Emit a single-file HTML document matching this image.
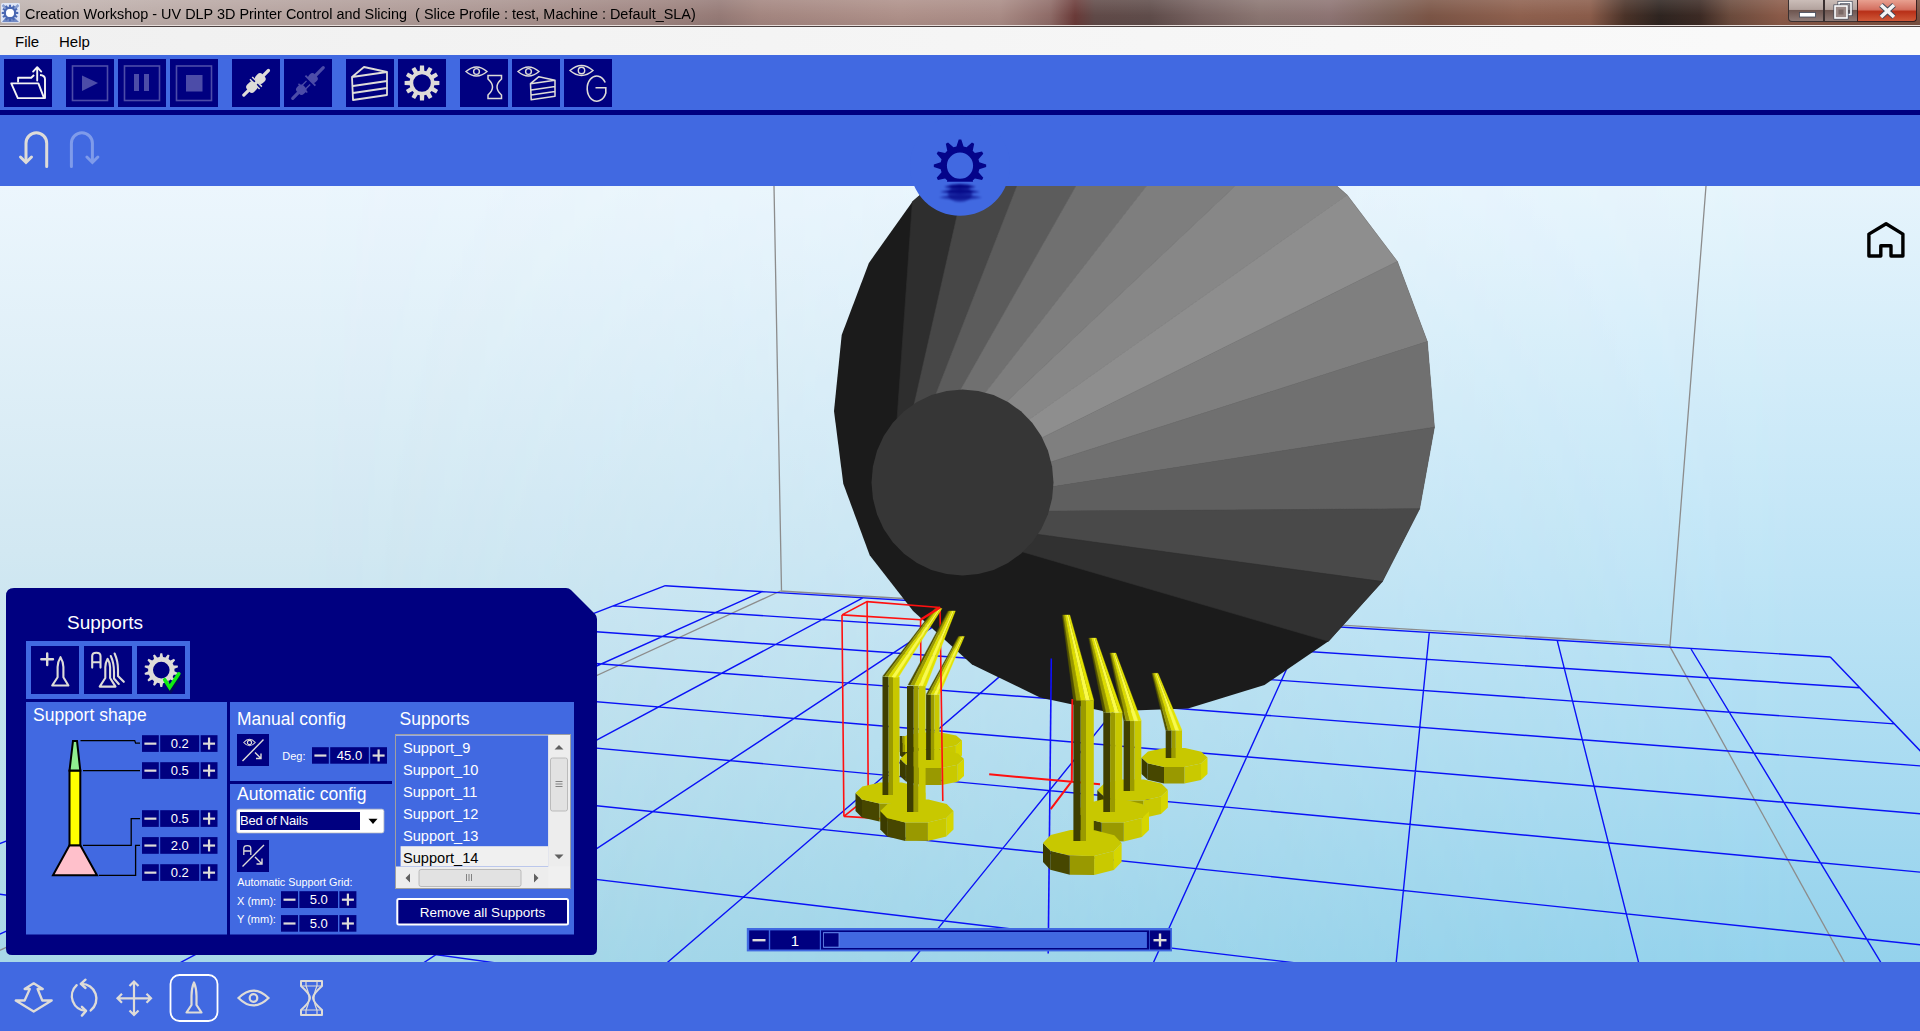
<!DOCTYPE html>
<html><head><meta charset="utf-8"><style>
html,body{margin:0;padding:0;width:1920px;height:1031px;overflow:hidden;background:#4169E1;font-family:"Liberation Sans",sans-serif;}
svg text{font-family:"Liberation Sans",sans-serif;}
</style></head><body>
<div style="position:absolute;left:0;top:0;width:1920px;height:26px;background:linear-gradient(90deg,#bdb3b0 0.0%,#c1b3af 3.12%,#b7a5a1 13.02%,#aa9490 26.04%,#9f8581 33.85%,#957a76 37.5%,#a3857f 39.58%,#ae9089 46.88%,#a98b85 52.08%,#8e6b67 54.69%,#6a3a38 55.99%,#604a48 57.03%,#5f4c4a 59.9%,#776260 62.5%,#8a7571 65.62%,#8d7473 69.27%,#7e6258 72.4%,#7b5546 74.48%,#8e604e 79.17%,#8a5c4a 82.81%,#4a3228 84.64%,#2e2420 86.46%,#3c2a24 88.54%,#6a4a3c 90.1%,#8a5a48 92.71%,#7a5040 100.0%);"></div>
<div style="position:absolute;left:0;top:0;width:1920px;height:26px;background:linear-gradient(180deg,rgba(255,255,255,0.12),rgba(255,255,255,0) 60%,rgba(0,0,0,0.05));"></div>
<div style="position:absolute;left:0;top:25px;width:1920px;height:1px;background:#e8dedb;"></div>
<div style="position:absolute;left:0;top:26px;width:1920px;height:1px;background:#4a4040;"></div>
<svg style="position:absolute;left:0;top:0" width="24" height="26"><rect x="1" y="3" width="19" height="19.7" rx="1.5" fill="#dfe6f6"/><path d="M2,22 L6,17 L10,19 L14,17 L19,22 Z" fill="#5572b8" opacity="0.8"/><path d="M2.5,5 L7,9 M18.5,5 L14,9" stroke="#8aa0d0" stroke-width="2.5"/><path d="M8.89,6.80 L9.02,4.66 L10.98,4.66 L11.11,6.80 L12.08,7.06 L13.28,5.27 L14.97,6.25 L14.01,8.17 L14.73,8.89 L16.65,7.93 L17.63,9.62 L15.84,10.82 L16.10,11.79 L18.24,11.92 L18.24,13.88 L16.10,14.01 L15.84,14.98 L17.63,16.18 L16.65,17.87 L14.73,16.91 L14.01,17.63 L14.97,19.55 L13.28,20.53 L12.08,18.74 L11.11,19.00 L10.98,21.14 L9.02,21.14 L8.89,19.00 L7.92,18.74 L6.72,20.53 L5.03,19.55 L5.99,17.63 L5.27,16.91 L3.35,17.87 L2.37,16.18 L4.16,14.98 L3.90,14.01 L1.76,13.88 L1.76,11.92 L3.90,11.79 L4.16,10.82 L2.37,9.62 L3.35,7.93 L5.27,8.89 L5.99,8.17 L5.03,6.25 L6.72,5.27 L7.92,7.06 Z M14,12.9 A4,4 0 1,0 6,12.9 A4,4 0 1,0 14,12.9 Z" fill="#4a68b2" fill-rule="evenodd"/><circle cx="10" cy="12.9" r="3.9" fill="#ffffff"/></svg>
<div style="position:absolute;left:25px;top:5px;font-family:'Liberation Sans',sans-serif;font-size:15.5px;color:#000;white-space:pre;transform:scaleX(0.931);transform-origin:0 0;">Creation Workshop - UV DLP 3D Printer Control and Slicing  ( Slice Profile : test, Machine : Default_SLA)</div>
<div style="position:absolute;left:1788px;top:0;width:36px;height:22px;border:1px solid #3a3030;border-top:none;border-radius:0 0 0 4px;background:linear-gradient(180deg,#cbbdb8 0%,#b3a39e 45%,#6e5650 50%,#8e7a76 100%);box-sizing:border-box;"></div>
<div style="position:absolute;left:1824px;top:0;width:34px;height:22px;border:1px solid #3a3030;border-top:none;background:linear-gradient(180deg,#cbbdb8 0%,#b3a39e 45%,#6e5650 50%,#8e7a76 100%);box-sizing:border-box;"></div>
<div style="position:absolute;left:1857px;top:0;width:60px;height:22px;border:1px solid #3a2020;border-top:none;border-radius:0 0 4px 0;background:linear-gradient(180deg,#e8a090 0%,#d47060 45%,#b83018 55%,#d05838 100%);box-sizing:border-box;"></div>
<svg style="position:absolute;left:1788px;top:0" width="132" height="24">
<rect x="11.5" y="12.5" width="16" height="4.5" fill="#fff" stroke="#404858" stroke-width="0.8"/>
<rect x="51" y="2.5" width="12" height="12" fill="none" stroke="#404858" stroke-width="3"/><rect x="51" y="2.5" width="12" height="12" fill="none" stroke="#fff" stroke-width="1.6"/>
<rect x="47" y="6" width="12" height="12" fill="#9a8885" stroke="#404858" stroke-width="3"/><rect x="47" y="6" width="12" height="12" fill="#9a8885" stroke="#fff" stroke-width="1.6"/><rect x="50.5" y="9.5" width="5" height="5" fill="#7a6865"/>
<path d="M93,5 L106,17 M106,5 L93,17" stroke="#404858" stroke-width="5.5"/><path d="M93,5 L106,17 M106,5 L93,17" stroke="#f4f4f4" stroke-width="3.6"/>
</svg>
<div style="position:absolute;left:0;top:27px;width:1920px;height:28px;background:linear-gradient(90deg,#f0f0f0,#f5f5f5 50%,#fafafa);"></div>
<div style="position:absolute;left:15px;top:33px;font-family:'Liberation Sans',sans-serif;font-size:15px;color:#000;">File</div>
<div style="position:absolute;left:59px;top:33px;font-family:'Liberation Sans',sans-serif;font-size:15px;color:#000;">Help</div>
<div style="position:absolute;left:0;top:55px;width:1920px;height:55px;background:#4169E1;"></div>
<div style="position:absolute;left:0;top:110px;width:1920px;height:5px;background:#000080;"></div>
<div style="position:absolute;left:0;top:115px;width:1920px;height:71px;background:#4169E1;"></div>
<div style="position:absolute;left:0;top:962px;width:1920px;height:69px;background:#4169E1;"></div>
<svg style="position:absolute;left:0;top:0" width="620" height="115"><rect x="4" y="59" width="48" height="48" fill="#000080"/>
<rect x="66" y="59" width="48" height="48" fill="#000080"/>
<rect x="118" y="59" width="48" height="48" fill="#000080"/>
<rect x="170" y="59" width="48" height="48" fill="#000080"/>
<rect x="232" y="59" width="48" height="48" fill="#000080"/>
<rect x="284" y="59" width="48" height="48" fill="#000080"/>
<rect x="346" y="59" width="48" height="48" fill="#000080"/>
<rect x="398" y="59" width="48" height="48" fill="#000080"/>
<rect x="460" y="59" width="48" height="48" fill="#000080"/>
<rect x="512" y="59" width="48" height="48" fill="#000080"/>
<rect x="564" y="59" width="48" height="48" fill="#000080"/>
<path d="M11.25,83.4 L38.4,83.4 L44.1,98.1 L17.8,98.1 Z" fill="none" stroke="#F4F4F4" stroke-width="1.9" stroke-linejoin="round"/>
<path d="M18.1,82.5 L18.1,77.8 L31.25,77.8 L34.1,75 M40,75 Q45,75.5 45,79 L45,98.75" fill="none" stroke="#F4F4F4" stroke-width="1.9" stroke-linejoin="round"/>
<path d="M37.2,80.5 L37.2,67.5 M33.1,71.6 L37.2,67.2 L41.25,71.6" fill="none" stroke="#F4F4F4" stroke-width="1.9" stroke-linecap="round" stroke-linejoin="round"/>
<rect x="72.5" y="66" width="35" height="34.5" fill="none" stroke="#4C4CA8" stroke-width="1.6"/>
<rect x="124.5" y="66" width="35" height="34.5" fill="none" stroke="#4C4CA8" stroke-width="1.6"/>
<rect x="176.5" y="66" width="35" height="34.5" fill="none" stroke="#4C4CA8" stroke-width="1.6"/>
<path d="M82,75.5 L98,83 L82,91 Z" fill="#4C4CA8"/>
<rect x="134" y="74" width="5" height="17" fill="#4C4CA8"/><rect x="144" y="74" width="5" height="17" fill="#4C4CA8"/>
<rect x="186" y="75" width="16.5" height="16.5" fill="#4C4CA8"/>
<g transform="translate(256.1,82.8) rotate(-45)" fill="#DEDCD8">
<rect x="-19" y="-1.6" width="38" height="3.2" rx="1.6"/>
<rect x="-11" y="-5" width="10" height="10" rx="3.5"/>
<rect x="1.5" y="-5" width="9" height="10" rx="3.5"/>
<rect x="-2.6" y="-6.8" width="1.5" height="13.6"/>
<rect x="0.6" y="-6.8" width="1.5" height="13.6"/>
</g>
<g transform="translate(308,83) rotate(-45)" fill="#4C4CA8">
<rect x="-23.2" y="-1.6" width="14" height="3.2" rx="1.6"/>
<rect x="-14" y="-4.8" width="9" height="9.6" rx="3.5"/>
<rect x="-8" y="-6.2" width="1.5" height="12.4"/>
<rect x="-6" y="-3.2" width="6.5" height="1.3"/><rect x="-6" y="1.9" width="6.5" height="1.3"/>
<rect x="3" y="-4.8" width="8" height="9.6" rx="3.5"/>
<rect x="2.5" y="-7" width="1.8" height="14"/>
<rect x="9" y="-1.6" width="14.2" height="3.2" rx="1.6"/>
</g>
<g transform="translate(352,66) scale(1.0)" fill="none" stroke="#DEDCD8" stroke-width="1.8" stroke-linejoin="round"><path d="M0,11 L12,1 L35,6 L35,29 L1,34 Z M0,11 L35,6 M1,20 L35,15 M1,27 L35,22"/></g>
<path d="M419.75,70.70 L419.94,65.62 L424.06,65.62 L424.25,70.70 L426.20,71.23 L428.91,66.92 L432.47,68.98 L430.09,73.47 L431.53,74.91 L436.02,72.53 L438.08,76.09 L433.77,78.80 L434.30,80.75 L439.38,80.94 L439.38,85.06 L434.30,85.25 L433.77,87.20 L438.08,89.91 L436.02,93.47 L431.53,91.09 L430.09,92.53 L432.47,97.02 L428.91,99.08 L426.20,94.77 L424.25,95.30 L424.06,100.38 L419.94,100.38 L419.75,95.30 L417.80,94.77 L415.09,99.08 L411.53,97.02 L413.91,92.53 L412.47,91.09 L407.98,93.47 L405.92,89.91 L410.23,87.20 L409.70,85.25 L404.62,85.06 L404.62,80.94 L409.70,80.75 L410.23,78.80 L405.92,76.09 L407.98,72.53 L412.47,74.91 L413.91,73.47 L411.53,68.98 L415.09,66.92 L417.80,71.23 Z M430.8,83 A8.8,8.8 0 1,0 413.2,83 A8.8,8.8 0 1,0 430.8,83 Z" fill="#DEDCD8" fill-rule="evenodd"/>
<path d="M466.0,71.5 Q476.5,62.5 487.0,71.5 Q476.5,80.5 466.0,71.5 Z" fill="none" stroke="#DEDCD8" stroke-width="1.4"/><circle cx="476.5" cy="71.5" r="2.88" fill="none" stroke="#DEDCD8" stroke-width="1.4"/>
<path d="M488,75.5 L501.5,75.5 L501.5,79 Q497,83 497,87 Q497,91 501.5,95 L501.5,98.5 L488,98.5 L488,95 Q492.5,91 492.5,87 Q492.5,83 488,79 Z" fill="none" stroke="#DEDCD8" stroke-width="1.5"/>
<path d="M518.0,71.5 Q528.5,62.5 539.0,71.5 Q528.5,80.5 518.0,71.5 Z" fill="none" stroke="#DEDCD8" stroke-width="1.4"/><circle cx="528.5" cy="71.5" r="2.88" fill="none" stroke="#DEDCD8" stroke-width="1.4"/>
<g transform="translate(530.5,76) scale(0.7)" fill="none" stroke="#DEDCD8" stroke-width="2.2" stroke-linejoin="round"><path d="M0,11 L12,1 L35,6 L35,29 L1,34 Z M0,11 L35,6 M1,20 L35,15 M1,27 L35,22"/></g>
<path d="M570.0,70.5 Q581.5,60.5 593.0,70.5 Q581.5,80.5 570.0,70.5 Z" fill="none" stroke="#DEDCD8" stroke-width="1.4"/><circle cx="581.5" cy="70.5" r="3.2" fill="none" stroke="#DEDCD8" stroke-width="1.4"/>
<path d="M605.2,82.5 A9.6,12.6 0 1,0 605.8,93 L605.8,87.7 L595.5,87.7" fill="none" stroke="#DEDCD8" stroke-width="1.6"/></svg>
<svg style="position:absolute;left:0;top:115px" width="120" height="71" viewBox="0 115 120 71">
<path d="M26,161 L26,143.3 A10.35,10.5 0 0,1 46.7,143.3 L46.7,166.6" fill="none" stroke="#DEDCD8" stroke-width="3" stroke-linecap="round"/>
<path d="M20.5,157 L26,162.5 L31.5,157" fill="none" stroke="#DEDCD8" stroke-width="3" stroke-linecap="round"/>
<path d="M71.4,166.6 L71.4,143.3 A10.5,10.5 0 0,1 92.4,143.3 L92.4,161" fill="none" stroke="#7f9bea" stroke-width="3" stroke-linecap="round"/>
<path d="M86.9,157 L92.4,162.5 L97.9,157" fill="none" stroke="#7f9bea" stroke-width="3" stroke-linecap="round"/>
</svg>
<svg style="position:absolute;left:0;top:186px" width="1920" height="776" viewBox="0 186 1920 776">
<defs><linearGradient id="bgL" x1="0" y1="186" x2="0" y2="962" gradientUnits="userSpaceOnUse"><stop offset="0" stop-color="#ECF6FD"/><stop offset="0.47" stop-color="#D2E8F2"/><stop offset="1" stop-color="#A8D8E8"/></linearGradient><linearGradient id="bgR" x1="0" y1="186" x2="0" y2="962" gradientUnits="userSpaceOnUse"><stop offset="0" stop-color="#E6F4FC"/><stop offset="0.5" stop-color="#BEE4F6"/><stop offset="1" stop-color="#94D2EC"/></linearGradient><linearGradient id="hm" x1="300" y1="0" x2="1800" y2="0" gradientUnits="userSpaceOnUse"><stop offset="0" stop-color="#fff" stop-opacity="0"/><stop offset="1" stop-color="#fff" stop-opacity="1"/></linearGradient><mask id="bgm" maskUnits="userSpaceOnUse" x="0" y="186" width="1920" height="776"><rect x="0" y="186" width="1920" height="776" fill="url(#hm)"/></mask></defs>
<rect x="0" y="186" width="1920" height="776" fill="url(#bgL)"/>
<rect x="0" y="186" width="1920" height="776" fill="url(#bgR)" mask="url(#bgm)"/>
<path d="M774,186 L781.5,590.5 M1706,186 L1670,645.6" stroke="#8c8c8c" stroke-width="1.3" fill="none"/>
<polyline points="780.4,591.0 820.8,593.5 861.8,596.0 903.4,598.5 945.7,601.1 988.6,603.7 1032.2,606.3 1076.5,609.0 1121.5,611.8 1167.3,614.5 1213.8,617.4 1261.0,620.2 1309.1,623.2 1357.9,626.1 1407.6,629.2 1458.1,632.2 1509.5,635.4 1561.8,638.5 1615.0,641.8 1669.1,645.1" stroke="#8c8c8c" stroke-width="1.3" fill="none"/>
<line x1="780.4" y1="591.0" x2="-360.0" y2="1115.9" stroke="#8c8c8c" stroke-width="1.3"/>
<line x1="1669.1" y1="645.1" x2="2219.6" y2="1641.1" stroke="#8c8c8c" stroke-width="1.3"/>
<path d="M665.3,585.7 L-585.0,1070.1 M762.2,591.7 L-390.8,1109.6 M862.8,597.8 L-176.4,1153.3 M967.3,604.2 L61.4,1201.7 M1075.9,610.9 L326.7,1255.7 M1189.0,617.8 L624.7,1316.4 M1306.6,625.0 L961.7,1385.0 M1429.3,632.5 L1345.9,1463.2 M1557.2,640.3 L1787.9,1553.2 M1690.7,648.5 L2302.0,1657.9 M1830.3,657.0 L2907.3,1781.1 M665.3,585.7 L1830.3,657.0 M613.3,605.9 L1859.7,687.8 M554.2,628.8 L1894.4,723.9 M486.2,655.1 L1935.7,767.1 M407.2,685.7 L1985.8,819.4 M314.4,721.7 L2047.9,884.1 M203.7,764.5 L2126.7,966.4 M69.5,816.5 L2230.2,1074.5 M-96.7,880.9 L2372.2,1222.7 M-307.8,962.7 L2578.8,1438.3 M-585.0,1070.1 L2907.3,1781.1" stroke="#0a12f6" stroke-width="1.4" fill="none"/>
<polygon points="912.4,201.7 971.9,150.0 1043.5,118.0 1122.0,105.0 1205.8,110.0 1283.8,140.0 1347.1,194.9 1397.4,261.5 1427.3,341.6 1434.4,427.2 1419.6,508.8 1382.4,581.6 1328.5,641.3 1264.5,684.9 1188.0,708.5 1105.0,711.5 1040.0,697.5 972.0,664.5 913.1,611.1 869.7,555.2 843.3,483.8 834.0,410.9 841.7,334.9 868.9,262.9" fill="#1b1b1b" />
<polygon points="893.3,471.6 912.4,201.7 971.9,150.0 905.7,441.5" fill="#2e2e2e" stroke="#2e2e2e" stroke-width="0.6"/>
<polygon points="905.7,441.5 971.9,150.0 1043.5,118.0 924.4,423.5" fill="#474747" stroke="#474747" stroke-width="0.6"/>
<polygon points="924.4,423.5 1043.5,118.0 1122.0,105.0 946.8,414.1" fill="#5c5c5c" stroke="#5c5c5c" stroke-width="0.6"/>
<polygon points="946.8,414.1 1122.0,105.0 1205.8,110.0 969.4,413.0" fill="#707070" stroke="#707070" stroke-width="0.6"/>
<polygon points="969.4,413.0 1205.8,110.0 1283.8,140.0 989.8,417.6" fill="#7e7e7e" stroke="#7e7e7e" stroke-width="0.6"/>
<polygon points="989.8,417.6 1283.8,140.0 1347.1,194.9 1011.3,432.0" fill="#878787" stroke="#878787" stroke-width="0.6"/>
<polygon points="1011.3,432.0 1347.1,194.9 1397.4,261.5 1022.4,447.4" fill="#8e8e8e" stroke="#8e8e8e" stroke-width="0.6"/>
<polygon points="1022.4,447.4 1397.4,261.5 1427.3,341.6 1030.7,468.5" fill="#7f7f7f" stroke="#7f7f7f" stroke-width="0.6"/>
<polygon points="1030.7,468.5 1427.3,341.6 1434.4,427.2 1031.1,490.1" fill="#707070" stroke="#707070" stroke-width="0.6"/>
<polygon points="1031.1,490.1 1434.4,427.2 1419.6,508.8 1025.5,511.3" fill="#5f5f5f" stroke="#5f5f5f" stroke-width="0.6"/>
<polygon points="1025.5,511.3 1419.6,508.8 1382.4,581.6 1012.3,530.9" fill="#494949" stroke="#494949" stroke-width="0.6"/>
<polygon points="1012.3,530.9 1382.4,581.6 1328.5,641.3 994.9,543.8" fill="#313131" stroke="#313131" stroke-width="0.6"/>
<polygon points="1053.5,482.5 1052.1,498.6 1048.0,514.3 1041.3,529.0 1032.2,542.3 1021.0,553.7 1008.0,563.0 993.6,569.9 978.3,574.1 962.5,575.5 946.7,574.1 931.4,569.9 917.0,563.0 904.0,553.7 892.8,542.3 883.7,529.0 877.0,514.3 872.9,498.6 871.5,482.5 872.9,466.4 877.0,450.7 883.7,436.0 892.8,422.7 904.0,411.3 917.0,402.0 931.4,395.1 946.7,390.9 962.5,389.5 978.3,390.9 993.6,395.1 1008.0,402.0 1021.0,411.3 1032.2,422.7 1041.3,436.0 1048.0,450.7 1052.1,466.4" fill="#363636" />
<line x1="1051.3" y1="658.6" x2="1048.2" y2="953.4" stroke="#1010ff" stroke-width="1.6"/>
<path d="M1072.4,699 L1071.8,781.2 M989.2,774.3 L1100,784.3 M1071.8,781.2 L1050.7,809.1" stroke="#ff1010" stroke-width="2" fill="none"/>
<polygon points="962.0,740.6 955.9,745.6 955.9,760.6 962.0,755.6" fill="#d6d600" /><polygon points="955.9,745.6 940.3,748.6 940.3,763.6 955.9,760.6" fill="#c9c900" /><polygon points="940.3,748.6 921.2,748.6 921.2,763.6 940.3,763.6" fill="#999900" /><polygon points="921.2,748.6 905.8,745.4 905.8,760.4 921.2,763.6" fill="#474700" /><polygon points="905.8,745.4 900.0,740.4 900.0,755.4 905.8,760.4" fill="#3b3b00" /><polygon points="962.0,740.6 955.9,745.6 940.3,748.6 921.2,748.6 905.8,745.4 900.0,740.4 906.1,735.4 921.7,732.4 940.8,732.4 956.2,735.6" fill="#c8c800" />
<polygon points="899.6,736.0 902.6,736.0 902.6,752.0 899.6,752.0" fill="#3f3f00" /><polygon points="902.6,736.0 904.8,736.0 904.8,752.0 902.6,752.0" fill="#9a9a00" /><polygon points="904.8,736.0 908.0,736.0 908.0,752.0 904.8,752.0" fill="#c8c800" />
<polygon points="964.0,759.1 957.7,764.7 957.7,781.7 964.0,776.1" fill="#d6d600" /><polygon points="957.7,764.7 941.6,768.1 941.6,785.1 957.7,781.7" fill="#c9c900" /><polygon points="941.6,768.1 921.8,768.0 921.8,785.0 941.6,785.1" fill="#999900" /><polygon points="921.8,768.0 905.9,764.5 905.9,781.5 921.8,785.0" fill="#474700" /><polygon points="905.9,764.5 900.0,758.9 900.0,775.9 905.9,781.5" fill="#3b3b00" /><polygon points="964.0,759.1 957.7,764.7 941.6,768.1 921.8,768.0 905.9,764.5 900.0,758.9 906.3,753.3 922.4,749.9 942.2,750.0 958.1,753.5" fill="#c8c800" />
<polygon points="926.1,694.6 930.9,694.6 930.9,760.0 926.1,760.0" fill="#3f3f00" /><polygon points="930.9,694.6 934.4,694.6 934.4,760.0 930.9,760.0" fill="#9a9a00" /><polygon points="934.4,694.6 939.5,694.6 939.5,760.0 934.4,760.0" fill="#c8c800" />
<polygon points="926.1,694.6 928.0,694.6 959.0,636.4 958.2,636.4" fill="#505000" stroke="#505000" stroke-width="0.3"/><polygon points="928.0,694.6 930.9,694.6 960.4,636.4 959.0,636.4" fill="#9a9a00" stroke="#9a9a00" stroke-width="0.3"/><polygon points="930.9,694.6 934.1,694.6 961.9,636.4 960.4,636.4" fill="#dcdc00" stroke="#dcdc00" stroke-width="0.3"/><polygon points="934.1,694.6 937.1,694.6 963.3,636.4 961.9,636.4" fill="#fafa4a" stroke="#fafa4a" stroke-width="0.3"/><polygon points="937.1,694.6 939.5,694.6 964.4,636.4 963.3,636.4" fill="#e4e400" stroke="#e4e400" stroke-width="0.3"/>
<path d="M842,614.9 L843.9,816.4 M867.1,601.6 L868.2,797 M940,607.5 L942.8,801 M920.6,619.7 L921.5,821 M843.9,816.4 L868.2,797 M843.9,816.4 L921.5,821" stroke="#ff1010" stroke-width="1.6" fill="none"/>
<polygon points="925.5,793.1 918.6,799.5 918.6,817.5 925.5,811.1" fill="#d6d600" /><polygon points="918.6,799.5 901.0,803.5 901.0,821.5 918.6,817.5" fill="#c9c900" /><polygon points="901.0,803.5 879.4,803.4 879.4,821.4 901.0,821.5" fill="#999900" /><polygon points="879.4,803.4 862.0,799.4 862.0,817.4 879.4,821.4" fill="#474700" /><polygon points="862.0,799.4 855.5,792.9 855.5,810.9 862.0,817.4" fill="#3b3b00" /><polygon points="925.5,793.1 918.6,799.5 901.0,803.5 879.4,803.4 862.0,799.4 855.5,792.9 862.4,786.5 880.0,782.5 901.6,782.6 919.0,786.6" fill="#c8c800" />
<polygon points="882.5,677.0 888.6,677.0 888.6,795.0 882.5,795.0" fill="#3f3f00" /><polygon points="888.6,677.0 893.0,677.0 893.0,795.0 888.6,795.0" fill="#9a9a00" /><polygon points="893.0,677.0 899.5,677.0 899.5,795.0 893.0,795.0" fill="#c8c800" />
<polygon points="882.5,676.4 884.7,676.6 935.6,608.5 934.5,608.5" fill="#505000" stroke="#505000" stroke-width="0.3"/><polygon points="884.7,676.6 888.2,676.8 937.2,608.5 935.6,608.5" fill="#9a9a00" stroke="#9a9a00" stroke-width="0.3"/><polygon points="888.2,676.8 891.9,677.1 939.0,608.5 937.2,608.5" fill="#dcdc00" stroke="#dcdc00" stroke-width="0.3"/><polygon points="891.9,677.1 895.4,677.4 940.7,608.5 939.0,608.5" fill="#fafa4a" stroke="#fafa4a" stroke-width="0.3"/><polygon points="895.4,677.4 898.2,677.6 942.0,608.5 940.7,608.5" fill="#e4e400" stroke="#e4e400" stroke-width="0.3"/>
<polygon points="953.5,811.1 946.3,818.1 946.3,836.6 953.5,829.6" fill="#d6d600" /><polygon points="946.3,818.1 927.9,822.4 927.9,840.9 946.3,836.6" fill="#c9c900" /><polygon points="927.9,822.4 905.3,822.4 905.3,840.9 927.9,840.9" fill="#999900" /><polygon points="905.3,822.4 887.1,818.0 887.1,836.5 905.3,840.9" fill="#474700" /><polygon points="887.1,818.0 880.3,810.9 880.3,829.4 887.1,836.5" fill="#3b3b00" /><polygon points="953.5,811.1 946.3,818.1 927.9,822.4 905.3,822.4 887.1,818.0 880.3,810.9 887.5,803.9 905.9,799.6 928.5,799.6 946.7,804.0" fill="#c8c800" />
<polygon points="907.0,686.0 913.7,686.0 913.7,812.0 907.0,812.0" fill="#3f3f00" /><polygon points="913.7,686.0 918.5,686.0 918.5,812.0 913.7,812.0" fill="#9a9a00" /><polygon points="918.5,686.0 925.6,686.0 925.6,812.0 918.5,812.0" fill="#c8c800" />
<polygon points="908.0,685.0 910.5,685.2 948.9,610.9 947.9,610.9" fill="#505000" stroke="#505000" stroke-width="0.3"/><polygon points="910.5,685.2 914.5,685.4 950.6,610.9 948.9,610.9" fill="#9a9a00" stroke="#9a9a00" stroke-width="0.3"/><polygon points="914.5,685.4 918.9,685.7 952.4,610.9 950.6,610.9" fill="#dcdc00" stroke="#dcdc00" stroke-width="0.3"/><polygon points="918.9,685.7 922.8,685.9 954.0,610.9 952.4,610.9" fill="#fafa4a" stroke="#fafa4a" stroke-width="0.3"/><polygon points="922.8,685.9 926.1,686.1 955.4,610.9 954.0,610.9" fill="#e4e400" stroke="#e4e400" stroke-width="0.3"/>
<path d="M842,614.9 L867.1,601.6 L940,607.5 M842,614.9 L920.6,619.7" stroke="#ff1010" stroke-width="1.6" fill="none"/><path d="M940,607.5 L920.6,619.7" stroke="#ff1010" stroke-width="2.4" fill="none"/>
<polygon points="1207.5,757.6 1201.0,763.4 1201.0,779.9 1207.5,774.1" fill="#d6d600" /><polygon points="1201.0,763.4 1184.4,767.0 1184.4,783.5 1201.0,779.9" fill="#c9c900" /><polygon points="1184.4,767.0 1164.0,767.0 1164.0,783.5 1184.4,783.5" fill="#999900" /><polygon points="1164.0,767.0 1147.6,763.3 1147.6,779.8 1164.0,783.5" fill="#474700" /><polygon points="1147.6,763.3 1141.5,757.4 1141.5,773.9 1147.6,779.8" fill="#3b3b00" /><polygon points="1207.5,757.6 1201.0,763.4 1184.4,767.0 1164.0,767.0 1147.6,763.3 1141.5,757.4 1148.0,751.6 1164.6,748.0 1185.0,748.0 1201.4,751.7" fill="#c8c800" />
<polygon points="1165.7,730.3 1171.6,730.3 1171.6,758.0 1165.7,758.0" fill="#3f3f00" /><polygon points="1171.6,730.3 1175.8,730.3 1175.8,758.0 1171.6,758.0" fill="#9a9a00" /><polygon points="1175.8,730.3 1182.0,730.3 1182.0,758.0 1175.8,758.0" fill="#c8c800" />
<polygon points="1165.7,730.3 1168.0,730.3 1152.7,673.3 1151.8,673.3" fill="#505000" stroke="#505000" stroke-width="0.3"/><polygon points="1168.0,730.3 1171.6,730.3 1154.0,673.3 1152.7,673.3" fill="#9a9a00" stroke="#9a9a00" stroke-width="0.3"/><polygon points="1171.6,730.3 1175.5,730.3 1155.5,673.3 1154.0,673.3" fill="#dcdc00" stroke="#dcdc00" stroke-width="0.3"/><polygon points="1175.5,730.3 1179.1,730.3 1156.9,673.3 1155.5,673.3" fill="#fafa4a" stroke="#fafa4a" stroke-width="0.3"/><polygon points="1179.1,730.3 1182.0,730.3 1158.0,673.3 1156.9,673.3" fill="#e4e400" stroke="#e4e400" stroke-width="0.3"/>
<polygon points="1167.9,790.1 1161.0,796.5 1161.0,814.0 1167.9,807.6" fill="#d6d600" /><polygon points="1161.0,796.5 1143.2,800.5 1143.2,818.0 1161.0,814.0" fill="#c9c900" /><polygon points="1143.2,800.5 1121.4,800.4 1121.4,817.9 1143.2,818.0" fill="#999900" /><polygon points="1121.4,800.4 1103.9,796.4 1103.9,813.9 1121.4,817.9" fill="#474700" /><polygon points="1103.9,796.4 1097.3,789.9 1097.3,807.4 1103.9,813.9" fill="#3b3b00" /><polygon points="1167.9,790.1 1161.0,796.5 1143.2,800.5 1121.4,800.4 1103.9,796.4 1097.3,789.9 1104.2,783.5 1122.0,779.5 1143.8,779.6 1161.3,783.6" fill="#c8c800" />
<polygon points="1123.6,720.8 1130.0,720.8 1130.0,791.0 1123.6,791.0" fill="#3f3f00" /><polygon points="1130.0,720.8 1134.6,720.8 1134.6,791.0 1130.0,791.0" fill="#9a9a00" /><polygon points="1134.6,720.8 1141.3,720.8 1141.3,791.0 1134.6,791.0" fill="#c8c800" />
<polygon points="1123.6,720.8 1126.1,720.8 1110.5,653.0 1109.7,653.0" fill="#505000" stroke="#505000" stroke-width="0.3"/><polygon points="1126.1,720.8 1130.0,720.8 1111.9,653.0 1110.5,653.0" fill="#9a9a00" stroke="#9a9a00" stroke-width="0.3"/><polygon points="1130.0,720.8 1134.2,720.8 1113.4,653.0 1111.9,653.0" fill="#dcdc00" stroke="#dcdc00" stroke-width="0.3"/><polygon points="1134.2,720.8 1138.1,720.8 1114.8,653.0 1113.4,653.0" fill="#fafa4a" stroke="#fafa4a" stroke-width="0.3"/><polygon points="1138.1,720.8 1141.3,720.8 1115.9,653.0 1114.8,653.0" fill="#e4e400" stroke="#e4e400" stroke-width="0.3"/>
<polygon points="1149.0,811.1 1141.9,818.1 1141.9,837.1 1149.0,830.1" fill="#d6d600" /><polygon points="1141.9,818.1 1123.8,822.4 1123.8,841.4 1141.9,837.1" fill="#c9c900" /><polygon points="1123.8,822.4 1101.6,822.4 1101.6,841.4 1123.8,841.4" fill="#999900" /><polygon points="1101.6,822.4 1083.7,818.0 1083.7,837.0 1101.6,841.4" fill="#474700" /><polygon points="1083.7,818.0 1077.0,810.9 1077.0,829.9 1083.7,837.0" fill="#3b3b00" /><polygon points="1149.0,811.1 1141.9,818.1 1123.8,822.4 1101.6,822.4 1083.7,818.0 1077.0,810.9 1084.1,803.9 1102.2,799.6 1124.4,799.6 1142.3,804.0" fill="#c8c800" />
<polygon points="1103.3,712.6 1110.1,712.6 1110.1,812.0 1103.3,812.0" fill="#3f3f00" /><polygon points="1110.1,712.6 1115.1,712.6 1115.1,812.0 1110.1,812.0" fill="#9a9a00" /><polygon points="1115.1,712.6 1122.3,712.6 1122.3,812.0 1115.1,812.0" fill="#c8c800" />
<polygon points="1103.3,712.6 1106.0,712.6 1089.7,638.0 1088.7,638.0" fill="#505000" stroke="#505000" stroke-width="0.3"/><polygon points="1106.0,712.6 1110.1,712.6 1091.4,638.0 1089.7,638.0" fill="#9a9a00" stroke="#9a9a00" stroke-width="0.3"/><polygon points="1110.1,712.6 1114.7,712.6 1093.2,638.0 1091.4,638.0" fill="#dcdc00" stroke="#dcdc00" stroke-width="0.3"/><polygon points="1114.7,712.6 1118.9,712.6 1094.8,638.0 1093.2,638.0" fill="#fafa4a" stroke="#fafa4a" stroke-width="0.3"/><polygon points="1118.9,712.6 1122.3,712.6 1096.2,638.0 1094.8,638.0" fill="#e4e400" stroke="#e4e400" stroke-width="0.3"/>
<polygon points="1121.6,843.1 1113.9,851.0 1113.9,870.0 1121.6,862.1" fill="#d6d600" /><polygon points="1113.9,851.0 1094.1,855.9 1094.1,874.9 1113.9,870.0" fill="#c9c900" /><polygon points="1094.1,855.9 1069.8,855.8 1069.8,874.8 1094.1,874.9" fill="#999900" /><polygon points="1069.8,855.8 1050.3,850.8 1050.3,869.8 1069.8,874.8" fill="#474700" /><polygon points="1050.3,850.8 1043.0,842.9 1043.0,861.9 1050.3,869.8" fill="#3b3b00" /><polygon points="1121.6,843.1 1113.9,851.0 1094.1,855.9 1069.8,855.8 1050.3,850.8 1043.0,842.9 1050.7,835.0 1070.5,830.1 1094.8,830.2 1114.3,835.2" fill="#c8c800" />
<polygon points="1073.4,700.4 1080.7,700.4 1080.7,841.0 1073.4,841.0" fill="#3f3f00" /><polygon points="1080.7,700.4 1086.0,700.4 1086.0,841.0 1080.7,841.0" fill="#9a9a00" /><polygon points="1086.0,700.4 1093.8,700.4 1093.8,841.0 1086.0,841.0" fill="#c8c800" />
<polygon points="1073.4,700.4 1076.3,700.4 1063.3,614.9 1062.2,614.9" fill="#505000" stroke="#505000" stroke-width="0.3"/><polygon points="1076.3,700.4 1080.7,700.4 1065.0,614.9 1063.3,614.9" fill="#9a9a00" stroke="#9a9a00" stroke-width="0.3"/><polygon points="1080.7,700.4 1085.6,700.4 1066.8,614.9 1065.0,614.9" fill="#dcdc00" stroke="#dcdc00" stroke-width="0.3"/><polygon points="1085.6,700.4 1090.1,700.4 1068.4,614.9 1066.8,614.9" fill="#fafa4a" stroke="#fafa4a" stroke-width="0.3"/><polygon points="1090.1,700.4 1093.8,700.4 1069.8,614.9 1068.4,614.9" fill="#e4e400" stroke="#e4e400" stroke-width="0.3"/>
<path d="M1868.9,234.1 L1886.1,223.7 L1902.9,234.1 L1902.9,256 L1891,256 L1891,245.8 L1880.8,245.8 L1880.8,256 L1868.9,256 Z" fill="none" stroke="#000" stroke-width="3.4" stroke-linejoin="round"/>
</svg>
<svg style="position:absolute;left:900px;top:115px" width="120" height="110" viewBox="900 115 120 110">
<defs><clipPath id="gclip"><rect x="900" y="115" width="120" height="66.7"/></clipPath>
<filter id="bl" x="-50%" y="-50%" width="200%" height="200%"><feGaussianBlur stdDeviation="1.1"/></filter>
<radialGradient id="rg" cx="0.5" cy="0.1" r="0.8"><stop offset="0" stop-color="#000080" stop-opacity="1"/><stop offset="1" stop-color="#000080" stop-opacity="0"/></radialGradient></defs>
<circle cx="960" cy="165.8" r="50" fill="#4169E1"/>
<g clip-path="url(#gclip)"><path d="M956.43,146.43 L958.72,139.53 L961.28,139.53 L963.57,146.43 L966.54,147.22 L971.98,142.40 L974.19,143.68 L972.73,150.80 L974.90,152.97 L982.02,151.51 L983.30,153.72 L978.48,159.16 L979.27,162.13 L986.17,164.42 L986.17,166.98 L979.27,169.27 L978.48,172.24 L983.30,177.68 L982.02,179.89 L974.90,178.43 L972.73,180.60 L974.19,187.72 L971.98,189.00 L966.54,184.18 L963.57,184.97 L961.28,191.87 L958.72,191.87 L956.43,184.97 L953.46,184.18 L948.02,189.00 L945.81,187.72 L947.27,180.60 L945.10,178.43 L937.98,179.89 L936.70,177.68 L941.52,172.24 L940.73,169.27 L933.83,166.98 L933.83,164.42 L940.73,162.13 L941.52,159.16 L936.70,153.72 L937.98,151.51 L945.10,152.97 L947.27,150.80 L945.81,143.68 L948.02,142.40 L953.46,147.22 Z M973.1,165.7 A13.1,13.1 0 1,0 946.9,165.7 A13.1,13.1 0 1,0 973.1,165.7 Z" fill="#04048a" fill-rule="evenodd"/></g>
<g filter="url(#bl)">
<path d="M944,187 Q960,181 976,187 Q960,190 944,187 Z" fill="#000080" opacity="0.95"/>
<path d="M940,192 Q960,186 980,192 Q960,195.5 940,192 Z" fill="#000080" opacity="0.8"/>
<path d="M939,197.5 Q960,191 982,197.5 Q960,202 939,197.5 Z" fill="#000080" opacity="0.55"/>
<ellipse cx="960" cy="194" rx="12" ry="8" fill="#000080" opacity="0.5"/>
</g>
</svg>
<svg style="position:absolute;left:0;top:580px" width="600" height="380" viewBox="0 580 600 380">
<path d="M14,588 L566,588 Q569,588 571,590 L595,614 Q597,616 597,619 L597,949 Q597,955 591,955 L12,955 Q6,955 6,949 L6,596 Q6,588 14,588 Z" fill="#000080"/>
<text x="67" y="628.5" font-family="Liberation Sans" font-size="19" fill="#fff">Supports</text>
<rect x="26" y="641" width="164" height="58" fill="#4169E1"/>
<rect x="31" y="646" width="48" height="48" fill="#000080"/>
<rect x="84" y="646" width="48" height="48" fill="#000080"/>
<rect x="137" y="646" width="48" height="48" fill="#000080"/>
<path d="M41.3,659.25 L53,659.25 M47.2,653.4 L47.2,665.1" stroke="#DEDCD8" stroke-width="2.4" stroke-linecap="round"/>
<path d="M60.5,657.2 Q63.4,662 63.4,667 L63.4,677.2 L68.4,685.5 L52.2,685.5 L57.6,677.2 L57.6,667 Q57.6,662 60.5,657.2 Z" fill="none" stroke="#DEDCD8" stroke-width="2.1" stroke-linejoin="round"/>
<path d="M92.2,667.6 L92.2,656 Q92.2,652.8 96.35,652.8 Q100.5,652.8 100.5,656 L100.5,667.6 M92.2,662.3 L100.5,662.3" fill="none" stroke="#DEDCD8" stroke-width="2.1" stroke-linecap="round"/>
<path d="M107.6,658.8 Q110.1,663 110.1,667.2 L110.1,678 L115.5,686.6 L99.7,686.6 L105.3,678 L105.3,667.2 Q105.3,663 107.6,658.8 Z" fill="none" stroke="#DEDCD8" stroke-width="2.1" stroke-linejoin="round"/>
<path d="M110.8,656 Q114,663 114,672 L114,678.5 L118.8,684 M114.6,653.5 Q118,661 118,670 L118,676 L123.8,681.8" fill="none" stroke="#DEDCD8" stroke-width="2.1" stroke-linecap="round"/>
<path d="M159.58,657.01 L160.35,653.13 L162.25,653.13 L163.02,657.01 L165.43,657.56 L167.81,654.40 L169.52,655.22 L168.53,659.06 L170.46,660.59 L173.98,658.78 L175.16,660.26 L172.61,663.29 L173.68,665.51 L177.64,665.40 L178.06,667.25 L174.44,668.87 L174.44,671.33 L178.06,672.95 L177.64,674.80 L173.68,674.69 L172.61,676.91 L175.16,679.94 L173.98,681.42 L170.46,679.61 L168.53,681.14 L169.52,684.98 L167.81,685.80 L165.43,682.64 L163.02,683.19 L162.25,687.07 L160.35,687.07 L159.58,683.19 L157.17,682.64 L154.79,685.80 L153.08,684.98 L154.07,681.14 L152.14,679.61 L148.62,681.42 L147.44,679.94 L149.99,676.91 L148.92,674.69 L144.96,674.80 L144.54,672.95 L148.16,671.33 L148.16,668.87 L144.54,667.25 L144.96,665.40 L148.92,665.51 L149.99,663.29 L147.44,660.26 L148.62,658.78 L152.14,660.59 L154.07,659.06 L153.08,655.22 L154.79,654.40 L157.17,657.56 Z M169.6,670.1 A8.3,8.3 0 1,0 153,670.1 A8.3,8.3 0 1,0 169.6,670.1 Z" fill="#DEDCD8" fill-rule="evenodd"/>
<path d="M165.5,680.5 L170.2,688.5 L179.5,674.5" fill="none" stroke="#062a06" stroke-width="5" opacity="0.3" transform="translate(0.8,0.8)"/><path d="M164.7,679.7 L169.7,687.5 L178.8,673.8" fill="none" stroke="#10ee10" stroke-width="3.6" stroke-linecap="round"/>
<rect x="26" y="702" width="201" height="232.5" fill="#4169E1"/>
<rect x="230" y="702" width="344" height="79" fill="#4169E1"/>
<rect x="230" y="784" width="162" height="150.5" fill="#4169E1"/>
<rect x="392" y="781" width="182" height="153.5" fill="#4169E1"/>
<text x="33" y="720.5" font-family="Liberation Sans" font-size="17.5" fill="#fff">Support shape</text>
<text x="237" y="725" font-family="Liberation Sans" font-size="17.5" fill="#fff">Manual config</text>
<text x="399.5" y="725" font-family="Liberation Sans" font-size="17.5" fill="#fff">Supports</text>
<text x="237" y="800" font-family="Liberation Sans" font-size="17.5" fill="#fff">Automatic config</text>
<path d="M53,875.3 L69.5,845.3 L80.3,845.3 L97,875.3 Z" fill="#FFC0CB" stroke="#000" stroke-width="2" stroke-linejoin="miter"/>
<rect x="69.5" y="770.6" width="10.8" height="74.7" fill="#FFFF00" stroke="#000" stroke-width="2"/>
<path d="M69.5,770.6 L73,741 L77,741 L80.3,770.6 Z" fill="#90EE90" stroke="#000" stroke-width="2" stroke-linejoin="miter"/>
<path d="M80.5,740.6 L134.7,740.6 L135.6,743.2 L140,743.2 M83,770.6 L140,770.6 M83,845.3 L131.2,845.3 L131.2,818.6 L140,818.6 M98.9,875.3 L135.6,875.3 L135.6,845.3 L140,845.3" fill="none" stroke="#000" stroke-width="1.3"/>
<rect x="142" y="735.2" width="16.8" height="16.7" fill="#000080"/><rect x="160.20000000000002" y="735.2" width="39" height="16.7" fill="#000080"/><rect x="200.60000000000002" y="735.2" width="16.9" height="16.7" fill="#000080"/><rect x="144.4" y="742.5500000000001" width="12" height="2.2" fill="#DEDCD8"/><rect x="203.05" y="742.5500000000001" width="12" height="2.2" fill="#DEDCD8"/><rect x="207.95000000000002" y="737.5500000000001" width="2.2" height="12" fill="#DEDCD8"/><text x="179.70000000000002" y="748.2500000000001" text-anchor="middle" font-family="Liberation Sans" font-size="13" fill="#fff">0.2</text>
<rect x="142" y="762.2" width="16.8" height="16.7" fill="#000080"/><rect x="160.20000000000002" y="762.2" width="39" height="16.7" fill="#000080"/><rect x="200.60000000000002" y="762.2" width="16.9" height="16.7" fill="#000080"/><rect x="144.4" y="769.5500000000001" width="12" height="2.2" fill="#DEDCD8"/><rect x="203.05" y="769.5500000000001" width="12" height="2.2" fill="#DEDCD8"/><rect x="207.95000000000002" y="764.5500000000001" width="2.2" height="12" fill="#DEDCD8"/><text x="179.70000000000002" y="775.2500000000001" text-anchor="middle" font-family="Liberation Sans" font-size="13" fill="#fff">0.5</text>
<rect x="142" y="810.2" width="16.8" height="16.7" fill="#000080"/><rect x="160.20000000000002" y="810.2" width="39" height="16.7" fill="#000080"/><rect x="200.60000000000002" y="810.2" width="16.9" height="16.7" fill="#000080"/><rect x="144.4" y="817.5500000000001" width="12" height="2.2" fill="#DEDCD8"/><rect x="203.05" y="817.5500000000001" width="12" height="2.2" fill="#DEDCD8"/><rect x="207.95000000000002" y="812.5500000000001" width="2.2" height="12" fill="#DEDCD8"/><text x="179.70000000000002" y="823.2500000000001" text-anchor="middle" font-family="Liberation Sans" font-size="13" fill="#fff">0.5</text>
<rect x="142" y="837.1" width="16.8" height="16.7" fill="#000080"/><rect x="160.20000000000002" y="837.1" width="39" height="16.7" fill="#000080"/><rect x="200.60000000000002" y="837.1" width="16.9" height="16.7" fill="#000080"/><rect x="144.4" y="844.45" width="12" height="2.2" fill="#DEDCD8"/><rect x="203.05" y="844.45" width="12" height="2.2" fill="#DEDCD8"/><rect x="207.95000000000002" y="839.45" width="2.2" height="12" fill="#DEDCD8"/><text x="179.70000000000002" y="850.1500000000001" text-anchor="middle" font-family="Liberation Sans" font-size="13" fill="#fff">2.0</text>
<rect x="142" y="864.2" width="16.8" height="16.7" fill="#000080"/><rect x="160.20000000000002" y="864.2" width="39" height="16.7" fill="#000080"/><rect x="200.60000000000002" y="864.2" width="16.9" height="16.7" fill="#000080"/><rect x="144.4" y="871.5500000000001" width="12" height="2.2" fill="#DEDCD8"/><rect x="203.05" y="871.5500000000001" width="12" height="2.2" fill="#DEDCD8"/><rect x="207.95000000000002" y="866.5500000000001" width="2.2" height="12" fill="#DEDCD8"/><text x="179.70000000000002" y="877.2500000000001" text-anchor="middle" font-family="Liberation Sans" font-size="13" fill="#fff">0.2</text>
<rect x="237" y="734" width="32" height="32" fill="#000080"/>
<path d="M243.75,742.5 Q249.5,736.0 255.25,742.5 Q249.5,749.0 243.75,742.5 Z" fill="none" stroke="#DEDCD8" stroke-width="1.1"/><circle cx="249.5" cy="742.5" r="2.08" fill="none" stroke="#DEDCD8" stroke-width="1.1"/>
<path d="M242.5,761 L263.5,739.5 M255,752.5 L261,758.5 M261,753.5 L261,758.5 L256,758.5" fill="none" stroke="#DEDCD8" stroke-width="1.4"/>
<text x="282.3" y="760" font-family="Liberation Sans" font-size="11" fill="#fff">Deg:</text>
<rect x="312" y="747.2" width="16.8" height="16.5" fill="#000080"/><rect x="330.2" y="747.2" width="38.6" height="16.5" fill="#000080"/><rect x="370.2" y="747.2" width="16.8" height="16.5" fill="#000080"/><rect x="314.4" y="754.45" width="12" height="2.2" fill="#DEDCD8"/><rect x="372.59999999999997" y="754.45" width="12" height="2.2" fill="#DEDCD8"/><rect x="377.49999999999994" y="749.45" width="2.2" height="12" fill="#DEDCD8"/><text x="349.5" y="760.1500000000001" text-anchor="middle" font-family="Liberation Sans" font-size="13" fill="#fff">45.0</text>
<rect x="236.8" y="809.2" width="147.1" height="23.7" rx="2" fill="#fff" stroke="#c8c8c8" stroke-width="0.8"/>
<rect x="240" y="812" width="120" height="18" fill="#000080"/>
<text x="240" y="825" font-family="Liberation Sans" font-size="13" fill="#fff" letter-spacing="-0.2">Bed of Nails</text>
<path d="M368.5,818.8 L377.5,818.8 L373,824 Z" fill="#000"/>
<rect x="237" y="840" width="32" height="32" fill="#000080"/>
<path d="M243.8,855 L243.8,848.5 Q243.8,845.7 247.3,845.7 Q250.8,845.7 250.8,848.5 L250.8,855 M243.8,851 L250.8,851" fill="none" stroke="#DEDCD8" stroke-width="1.3"/>
<path d="M242.5,866.5 L264,845 M255,857 L262,864 M262,858.5 L262,864 L256.5,864" fill="none" stroke="#DEDCD8" stroke-width="1.4"/>
<text x="237.2" y="886" font-family="Liberation Sans" font-size="10.8" fill="#fff">Automatic Support Grid:</text>
<text x="237" y="905" font-family="Liberation Sans" font-size="11" fill="#fff">X (mm):</text>
<text x="237" y="923" font-family="Liberation Sans" font-size="11" fill="#fff">Y (mm):</text>
<rect x="281" y="891.2" width="17" height="16.8" fill="#000080"/><rect x="299.4" y="891.2" width="38.6" height="16.8" fill="#000080"/><rect x="339.4" y="891.2" width="17" height="16.8" fill="#000080"/><rect x="283.5" y="898.6" width="12" height="2.2" fill="#DEDCD8"/><rect x="341.9" y="898.6" width="12" height="2.2" fill="#DEDCD8"/><rect x="346.79999999999995" y="893.6" width="2.2" height="12" fill="#DEDCD8"/><text x="318.7" y="904.3000000000001" text-anchor="middle" font-family="Liberation Sans" font-size="13" fill="#fff">5.0</text>
<rect x="281" y="915.1" width="17" height="16.6" fill="#000080"/><rect x="299.4" y="915.1" width="38.6" height="16.6" fill="#000080"/><rect x="339.4" y="915.1" width="17" height="16.6" fill="#000080"/><rect x="283.5" y="922.4" width="12" height="2.2" fill="#DEDCD8"/><rect x="341.9" y="922.4" width="12" height="2.2" fill="#DEDCD8"/><rect x="346.79999999999995" y="917.4" width="2.2" height="12" fill="#DEDCD8"/><text x="318.7" y="928.1" text-anchor="middle" font-family="Liberation Sans" font-size="13" fill="#fff">5.0</text>
<rect x="395.5" y="734.5" width="175" height="154" fill="#f0f0f0" stroke="#a0a0a0" stroke-width="1"/>
<rect x="396" y="735.5" width="152.3" height="131" fill="#4169E1"/>
<rect x="400.6" y="846.2" width="147.7" height="20.2" fill="#f0f0f0"/>
<text x="403" y="753" font-family="Liberation Sans" font-size="14.6" fill="#fff">Support_9</text>
<text x="403" y="775" font-family="Liberation Sans" font-size="14.6" fill="#fff">Support_10</text>
<text x="403" y="797" font-family="Liberation Sans" font-size="14.6" fill="#fff">Support_11</text>
<text x="403" y="819" font-family="Liberation Sans" font-size="14.6" fill="#fff">Support_12</text>
<text x="403" y="841" font-family="Liberation Sans" font-size="14.6" fill="#fff">Support_13</text>
<text x="403" y="863" font-family="Liberation Sans" font-size="14.6" fill="#000">Support_14</text>
<rect x="548.3" y="735.5" width="21.7" height="131" fill="#ededed"/>
<rect x="550.5" y="758" width="17" height="53" rx="2" fill="#e2e2e2" stroke="#b0b0b0" stroke-width="0.8"/>
<path d="M555.5,781.5 L562.5,781.5 M555.5,784 L562.5,784 M555.5,786.5 L562.5,786.5" stroke="#777" stroke-width="0.9"/>
<path d="M554.5,749.5 L559,745 L563.5,749.5 Z M554.5,854.5 L559,859 L563.5,854.5 Z" fill="#606060"/>
<rect x="396" y="867.5" width="152.3" height="20.5" fill="#ededed"/>
<rect x="419" y="869.5" width="102" height="17" rx="2" fill="#e2e2e2" stroke="#b0b0b0" stroke-width="0.8"/>
<path d="M466.5,874 L466.5,881 M469,874 L469,881 M471.5,874 L471.5,881" stroke="#777" stroke-width="0.9"/>
<path d="M410,873.5 L405.5,878 L410,882.5 Z M534,873.5 L538.5,878 L534,882.5 Z" fill="#606060"/>
<rect x="397.3" y="898.9" width="170.7" height="25.7" rx="1.5" fill="#000080" stroke="#ffffff" stroke-width="2"/>
<text x="482.5" y="916.5" text-anchor="middle" font-family="Liberation Sans" font-size="13.5" fill="#fff">Remove all Supports</text>
</svg>
<svg style="position:absolute;left:740px;top:920px" width="440" height="40" viewBox="740 920 440 40">
<rect x="746.8" y="928" width="425.2" height="23.4" fill="#4169E1"/>
<rect x="749.2" y="930.4" width="19.6" height="19.1" fill="#000080"/>
<rect x="770.2" y="930.4" width="49.6" height="19.1" fill="#000080"/>
<rect x="821" y="930.4" width="328" height="19.1" fill="#000080"/>
<rect x="823.4" y="932" width="323.5" height="16" fill="#4169E1"/>
<rect x="823.4" y="932.8" width="15.6" height="14.3" fill="#000080" stroke="#6a8ae8" stroke-width="0.8"/>
<rect x="1149.7" y="930.4" width="20.6" height="19.1" fill="#000080"/>
<rect x="752.5" y="939" width="13" height="2.4" fill="#DEDCD8"/>
<rect x="1153.5" y="939" width="13" height="2.4" fill="#DEDCD8"/><rect x="1158.8" y="933.5" width="2.4" height="13" fill="#DEDCD8"/>
<text x="795" y="945.5" text-anchor="middle" font-family="Liberation Sans" font-size="15" fill="#fff">1</text>
</svg>
<svg style="position:absolute;left:0;top:962px" width="400" height="69" viewBox="0 962 400 69">
<path d="M15.7,1000.5 L24.6,1000.5 L29.8,989 L24.6,989 L33.7,983.3 L42.8,989 L37.6,989 L42.3,1000.5 L51.7,1000.5 L33.7,1011.5 Z" fill="none" stroke="#DEDCD8" stroke-width="2.3" stroke-linejoin="round"/>
<path d="M76.7,985.2 A14.8,14.8 0 0,0 86,1010.9 M90.7,1010.4 A14.8,14.8 0 0,0 81.4,983.9" fill="none" stroke="#DEDCD8" stroke-width="2.4" stroke-linecap="round"/>
<path d="M85.5,979.7 L80.8,983.9 L85.5,988 M81.9,1006.8 L86,1010.9 L81.9,1015.6" fill="none" stroke="#DEDCD8" stroke-width="2.4" stroke-linecap="round" stroke-linejoin="round"/>
<path d="M134,981.5 L134,1015 M117.5,998.3 L151,998.3 M129.5,986 L134,981.5 L138.5,986 M129.5,1010.5 L134,1015 L138.5,1010.5 M122,993.8 L117.5,998.3 L122,1002.8 M146.5,993.8 L151,998.3 L146.5,1002.8" fill="none" stroke="#DEDCD8" stroke-width="2.2"/>
<rect x="170.5" y="975" width="47" height="46" rx="9" fill="none" stroke="#ffffff" stroke-width="1.8"/>
<path d="M194,982.5 Q196.5,988 196.5,996 L196.5,1005 L201.5,1012.5 L186.5,1012.5 L191.5,1005 L191.5,996 Q191.5,988 194,982.5 Z" fill="none" stroke="#DEDCD8" stroke-width="2.2" stroke-linejoin="round"/>
<path d="M238.5,998 Q253.5,983 268.5,998 Q253.5,1013 238.5,998 Z" fill="none" stroke="#DEDCD8" stroke-width="2.2"/>
<circle cx="253.5" cy="998" r="3.8" fill="none" stroke="#DEDCD8" stroke-width="2.2"/>
<path d="M301,981 L322,981 L322,986 Q313,994 313,998 Q313,1002 322,1010 L322,1015 L301,1015 L301,1010 Q310,1002 310,998 Q310,994 301,986 Z" fill="none" stroke="#DEDCD8" stroke-width="2" stroke-linejoin="round"/>
<path d="M301,986 L322,986 M301,1010 L322,1010 M306,981 L306,986 Q309,993 309,998 Q309,1003 306,1010 L306,1015 M317,981 L317,986 Q314,993 314,998 Q314,1003 317,1010 L317,1015" fill="none" stroke="#DEDCD8" stroke-width="1.2"/>
</svg>
</body></html>
